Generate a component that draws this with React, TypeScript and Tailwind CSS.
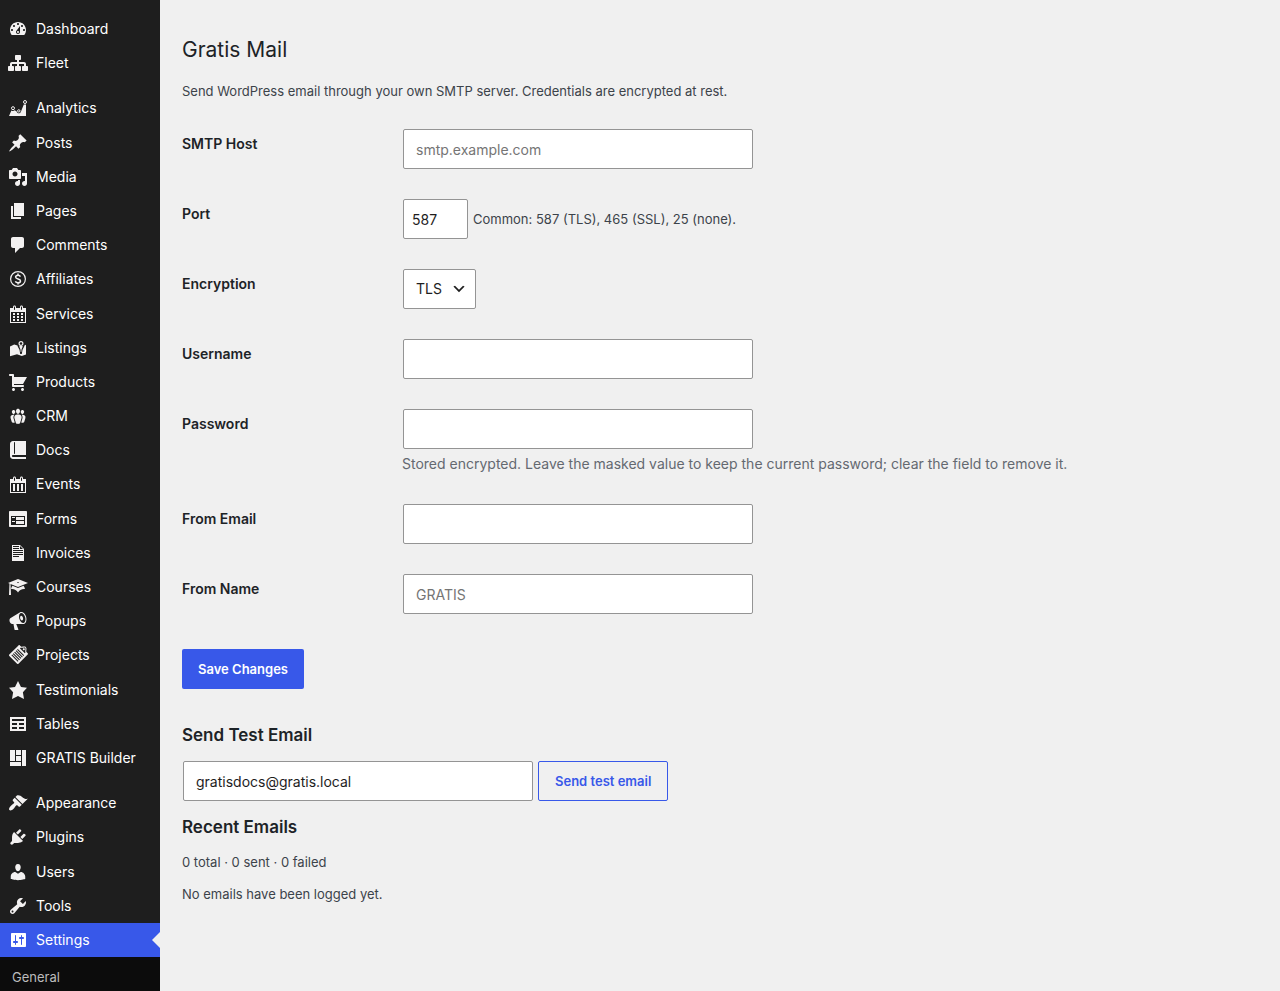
import React, { useState } from "react";

const icons: Record<string, string> = {
  dashboard:
    "M3.76 16h12.48c1.1-1.37 1.76-3.11 1.76-5 0-4.42-3.58-8-8-8s-8 3.58-8 8c0 1.89.66 3.63 1.76 5zM10 4c.55 0 1 .45 1 1s-.45 1-1 1-1-.45-1-1 .45-1 1-1zM6 6c.55 0 1 .45 1 1s-.45 1-1 1-1-.45-1-1 .45-1 1-1zm8 0c.55 0 1 .45 1 1s-.45 1-1 1-1-.45-1-1 .45-1 1-1zm-5.37 5.55L12 7v6c0 1.1-.9 2-2 2s-2-.9-2-2c0-.57.24-1.08.63-1.45zM4 10c.55 0 1 .45 1 1s-.45 1-1 1-1-.45-1-1 .45-1 1-1zm12 0c.55 0 1 .45 1 1s-.45 1-1 1-1-.45-1-1 .45-1 1-1zm-5 3c0-.55-.45-1-1-1s-1 .45-1 1 .45 1 1 1 1-.45 1-1z",
  fleet:
    "M18 13h1c.55 0 1 .45 1 1.01v2.98c0 .56-.45 1.01-1 1.01h-4c-.55 0-1-.45-1-1.01v-2.98c0-.56.45-1.01 1-1.01h1v-2h-5v2h1c.55 0 1 .45 1 1.01v2.98c0 .56-.45 1.01-1 1.01H8c-.55 0-1-.45-1-1.01v-2.98c0-.56.45-1.01 1-1.01h1v-2H4v2h1c.55 0 1 .45 1 1.01v2.98C6 17.55 5.55 18 5 18H1c-.55 0-1-.45-1-1.01v-2.98C0 13.45.45 13 1 13h1v-2c0-1.1.9-2 2-2h5V7H8c-.55 0-1-.45-1-1.01V3.01C7 2.45 7.45 2 8 2h4c.55 0 1 .45 1 1.01v2.98C13 6.55 12.55 7 12 7h-1v2h5c1.1 0 2 .9 2 2v2z",
  posts:
    "M10.44 3.02l1.82-1.82 6.36 6.35-1.83 1.82c-1.05-.68-2.48-.57-3.41.36l-.75.75c-.92.93-1.04 2.35-.35 3.41l-1.83 1.82-2.41-2.41-2.8 2.79c-.42.42-3.38 2.71-3.8 2.29s1.86-3.39 2.28-3.81l2.79-2.79L4.1 9.36l1.83-1.82c1.05.69 2.48.57 3.4-.36l.75-.75c.93-.92 1.05-2.35.36-3.41z",
  media:
    "M13 11V4c0-.55-.45-1-1-1h-1.67L9 1H5L3.67 3H2c-.55 0-1 .45-1 1v7c0 .55.45 1 1 1h10c.55 0 1-.45 1-1zM7 4.5c1.38 0 2.5 1.12 2.5 2.5S8.38 9.5 7 9.5 4.5 8.38 4.5 7 5.62 4.5 7 4.5zM14 6h5v10.5c0 1.38-1.12 2.5-2.5 2.5S14 17.88 14 16.5s1.12-2.5 2.5-2.5c.17 0 .34.02.5.05V9h-3V6zm-4 8.05V13h2v3.5c0 1.38-1.12 2.5-2.5 2.5S7 17.88 7 16.5 8.12 14 9.5 14c.17 0 .34.02.5.05z",
  pages: "M6 15V2h10v13H6zm-1 1h8v2H3V5h2v11z",
  comments:
    "M5 2h9c1.1 0 2 .9 2 2v7c0 1.1-.9 2-2 2h-2l-5 5v-5H5c-1.1 0-2-.9-2-2V4c0-1.1.9-2 2-2z",
  services:
    "M15 4h3v15H2V4h3V3c0-.41.15-.76.44-1.06.29-.29.65-.44 1.06-.44s.77.15 1.06.44c.29.3.44.65.44 1.06v1h4V3c0-.41.15-.76.44-1.06.29-.29.65-.44 1.06-.44s.77.15 1.06.44c.29.3.44.65.44 1.06v1zM6 3v2.5c0 .14.05.26.15.36.09.09.21.14.35.14s.26-.05.35-.14c.1-.1.15-.22.15-.36V3c0-.14-.05-.26-.15-.35-.09-.1-.21-.15-.35-.15s-.26.05-.35.15c-.1.09-.15.21-.15.35zm7 0v2.5c0 .14.05.26.14.36.1.09.22.14.36.14s.26-.05.36-.14c.09-.1.14-.22.14-.36V3c0-.14-.05-.26-.14-.35-.1-.1-.22-.15-.36-.15s-.26.05-.36.15c-.09.09-.14.21-.14.35zm4 15V8H3v10h14zM7 9v2H5V9h2zm2 0h2v2H9V9zm4 2V9h2v2h-2zm-6 1v2H5v-2h2zm2 0h2v2H9v-2zm4 2v-2h2v2h-2zm-6 1v2H5v-2h2zm4 2H9v-2h2v2zm4 0h-2v-2h2v2z",
  products:
    "M6 13h9c.55 0 1 .45 1 1s-.45 1-1 1H5c-.55 0-1-.45-1-1V4H2c-.55 0-1-.45-1-1s.45-1 1-1h3c.55 0 1 .45 1 1v2h13l-4 7H6v1zm-.5 3c.83 0 1.5.67 1.5 1.5S6.33 19 5.5 19 4 18.33 4 17.5 4.67 16 5.5 16zm9 0c.83 0 1.5.67 1.5 1.5s-.67 1.5-1.5 1.5-1.5-.67-1.5-1.5.67-1.5 1.5-1.5z",
  crm: "M8.03 4.46c-.29 1.28.55 3.46 1.97 3.46 1.41 0 2.25-2.18 1.96-3.46-.22-.98-1.08-1.63-1.96-1.63-.89 0-1.74.65-1.97 1.63zm-4.13.9c-.25 1.08.47 2.93 1.67 2.93s1.92-1.85 1.67-2.93c-.19-.83-.92-1.39-1.67-1.39s-1.48.56-1.67 1.39zm8.86 0c-.25 1.08.47 2.93 1.66 2.93 1.2 0 1.92-1.85 1.67-2.93-.19-.83-.92-1.39-1.67-1.39-.74 0-1.47.56-1.66 1.39zm-.59 11.43l1.25-4.3C14.2 10 12.71 8.47 10 8.47c-2.72 0-4.21 1.53-3.44 4.02l1.26 4.3C8.05 17.51 9 18 10 18c.98 0 1.94-.49 2.17-1.21zm-6.1-7.63c-.49.67-.96 1.83-.42 3.59l1.12 3.79c-.34.2-.77.31-1.2.31-.85 0-1.65-.41-1.85-1.03l-1.07-3.65c-.65-2.11.61-3.4 2.92-3.4.27 0 .54.02.79.06-.1.1-.2.22-.29.33zm8.35-.39c2.31 0 3.58 1.29 2.92 3.4l-1.07 3.65c-.2.62-1 1.03-1.85 1.03-.43 0-.86-.11-1.2-.31l1.11-3.77c.55-1.78.08-2.94-.42-3.61-.08-.11-.18-.23-.28-.33.25-.04.51-.06.79-.06z",
  docs: "M5 17h13v2H5c-1.66 0-3-1.34-3-3V4c0-1.66 1.34-3 3-3h13v14H5c-.55 0-1 .45-1 1s.45 1 1 1zm2-3.5v-11c0-.28-.22-.5-.5-.5s-.5.22-.5.5v11c0 .28.22.5.5.5s.5-.22.5-.5z",
  events:
    "M15 4h3v14H2V4h3V3c0-.83.67-1.5 1.5-1.5S8 2.17 8 3v1h4V3c0-.83.67-1.5 1.5-1.5S15 2.17 15 3v1zM6 3v2.5c0 .28.22.5.5.5s.5-.22.5-.5V3c0-.28-.22-.5-.5-.5S6 2.72 6 3zm7 0v2.5c0 .28.22.5.5.5s.5-.22.5-.5V3c0-.28-.22-.5-.5-.5s-.5.22-.5.5zm4 14V8H3v9h14zM7 16V9H5v7h2zm4 0V9H9v7h2zm4 0V9h-2v7h2z",
  forms:
    "M2 2h16c.55 0 1 .45 1 1v14c0 .55-.45 1-1 1H2c-.55 0-1-.45-1-1V3c0-.55.45-1 1-1zm15 14V7H3v9h14zM4 8v1h3V8H4zm4 0v3h8V8H8zm-4 4v1h3v-1H4zm4 0v3h8v-3H8z",
  invoices:
    "M12 2l4 4v12H4V2h8zM5 3v1h6V3H5zm7 3h3l-3-3v3zM5 5v1h6V5H5zm10 3V7H5v1h10zm0 2V9H5v1h10zm0 2v-1H5v1h10zm-4 2v-1H5v1h6z",
  courses:
    "M10 10L2.54 7.02 3 18H1l.48-11.41L0 6l10-4 10 4zm0-5c-.55 0-1 .22-1 .5s.45.5 1 .5 1-.22 1-.5-.45-.5-1-.5zm0 6l5.57-2.23c.71.94 1.2 2.07 1.36 3.3-.3-.04-.61-.07-.93-.07-2.55 0-4.78 1.37-6 3.41C8.78 13.37 6.55 12 4 12c-.32 0-.63.03-.93.07.16-1.23.65-2.36 1.36-3.3z",
  popups:
    "M18.15 5.94c.46 1.62.38 3.22-.02 4.48-.42 1.28-1.26 2.18-2.3 2.48-.16.06-.26.06-.4.06-.06.02-.12.02-.18.02-.06.02-.14.02-.22.02h-6.8l2.22 5.5c.02.14-.06.26-.14.34-.08.1-.24.16-.34.16H6.95c-.1 0-.26-.06-.34-.16-.08-.08-.16-.2-.14-.34l-1-5.5H4.25l-.02-.02c-.5.06-1.08-.18-1.54-.62s-.88-1.08-1.06-1.88c-.24-.8-.2-1.56-.02-2.2.18-.62.58-1.08 1.06-1.3l.02-.02 9-5.4c.1-.06.18-.1.24-.16.06-.04.14-.08.24-.12.16-.08.28-.12.5-.18 1.04-.3 2.24.1 3.22.98s1.84 2.24 2.26 3.86zm-2.58 5.98h-.02c.4-.1.74-.34 1.04-.7.58-.7.86-1.76.86-3.04 0-.64-.1-1.3-.28-1.98-.34-1.36-1.02-2.5-1.78-3.24s-1.68-1.1-2.46-.88c-.82.22-1.4.96-1.7 2-.32 1.04-.28 2.36.06 3.72.38 1.36 1 2.5 1.8 3.24.78.74 1.62 1.1 2.48.88zm-2.54-7.08c.22-.04.42-.02.62.04.38.16.76.48 1.02 1s.42 1.2.42 1.78c0 .3-.04.56-.12.8-.18.48-.44.84-.86.94-.34.1-.8-.06-1.14-.4s-.64-.86-.78-1.5c-.18-.62-.12-1.24.02-1.72s.48-.84.82-.94z",
  projects:
    "M11.9.39l1.4 1.4c1.61.19 3.5-.74 4.61.37s.18 3 .37 4.61l1.4 1.4c.39.39.39 1.02 0 1.41l-9.19 9.2c-.4.39-1.03.39-1.42 0L1.29 11c-.39-.39-.39-1.02 0-1.42l9.2-9.19c.39-.39 1.02-.39 1.41 0zm.58 2.25l-.58.58 4.95 4.95.58-.58c-.19-.6-.2-1.22-.15-1.82.02-.31.05-.62.09-.92.12-1 .18-1.63-.17-1.98s-.98-.29-1.98-.17c-.3.04-.61.07-.92.09-.6.05-1.22.04-1.82-.15zm4.02.93c.39.39.39 1.03 0 1.42s-1.03.39-1.42 0-.39-1.03 0-1.42 1.03-.39 1.42 0zm-6.72.36l-.71.7L15.44 11l.7-.71zM8.36 5.34l-.7.71 6.36 6.36.71-.7zM6.95 6.76l-.71.7 6.37 6.37.7-.71zM5.54 8.17l-.71.71 6.36 6.36.71-.71zM4.12 9.58l-.71.71 6.37 6.37.71-.71z",
  testimonials: "M10 1l3 6 6 .75-4.12 4.62L16 19l-6-3-6 3 1.13-6.63L1 7.75 7 7z",
  tables:
    "M18 17V3H2v14h16zM16 7H4V5h12v2zm-7 4H4V9h5v2zm7 0h-5V9h5v2zm-7 4H4v-2h5v2zm7 0h-5v-2h5v2z",
  builder: "M2 2h5v11H2V2zm6 0h5v5H8V2zm6 0h4v16h-4V2zM8 8h5v5H8V8zm-6 6h11v4H2v-4z",
  appearance:
    "M14.48 11.06L7.41 3.99l1.5-1.5c.5-.56 2.3-.47 3.51.32 1.21.8 1.43 1.28 2.91 2.1 1.18.64 2.45 1.26 4.45.85zm-.71.71L6.7 4.7 4.93 6.47c-.39.39-.39 1.02 0 1.41l1.06 1.06c.39.39.39 1.03 0 1.42-.6.6-1.43 1.11-2.21 1.69-.35.26-.7.53-1.01.84C1.43 14.23.4 16.08 1.4 17.07c.99 1 2.84-.03 4.18-1.36.31-.31.58-.66.85-1.02.57-.78 1.08-1.61 1.69-2.21.39-.39 1.02-.39 1.41 0l1.06 1.06c.39.39 1.02.39 1.41 0z",
  plugins:
    "M13.11 4.36L9.87 7.6 8 5.73l3.24-3.24c.35-.34 1.05-.2 1.56.32.52.51.66 1.21.31 1.55zm-8 1.77l.91-1.12 9.01 9.01-1.19.84c-.71.71-2.63 1.16-3.82 1.16H6.14L4.9 17.26c-.59.59-1.54.59-2.12 0-.59-.58-.59-1.53 0-2.12l1.24-1.24v-3.88c0-1.13.4-3.19 1.09-3.89zm7.26 3.97l3.24-3.24c.34-.35 1.04-.21 1.55.31.52.51.66 1.21.31 1.55l-3.24 3.25z",
  users:
    "M10 9.25c-2.27 0-2.73-3.44-2.73-3.44C7 4.02 7.82 2 9.97 2c2.16 0 2.98 2.02 2.71 3.81 0 0-.41 3.44-2.68 3.44zm0 2.57L12.72 10c2.39 0 4.52 2.33 4.52 4.53v2.49s-3.65 1.13-7.24 1.13c-3.65 0-7.24-1.13-7.24-1.13v-2.49c0-2.25 1.94-4.48 4.47-4.48z",
  tools:
    "M16.68 9.77c-1.34 1.34-3.3 1.67-4.95.99l-5.41 6.52c-.99.99-2.59.99-3.58 0s-.99-2.59 0-3.57l6.52-5.42c-.68-1.65-.35-3.61.99-4.95 1.28-1.28 3.12-1.62 4.72-1.06l-2.89 2.89 2.82 2.82 2.86-2.87c.53 1.58.18 3.39-1.08 4.65zM3.81 16.21c.4.39 1.04.39 1.43 0 .4-.4.4-1.04 0-1.43-.39-.4-1.03-.4-1.43 0-.39.39-.39 1.03 0 1.43z",
  settings:
    "M18 16V4c0-.55-.45-1-1-1H4c-.55 0-1 .45-1 1v12c0 .55.45 1 1 1h13c.55 0 1-.45 1-1zM8 11h1c.55 0 1 .45 1 1s-.45 1-1 1H8v1.5c0 .28-.22.5-.5.5s-.5-.22-.5-.5V13H6c-.55 0-1-.45-1-1s.45-1 1-1h1V5.5c0-.28.22-.5.5-.5s.5.22.5.5V11zm5-2h-1c-.55 0-1-.45-1-1s.45-1 1-1h1V5.5c0-.28.22-.5.5-.5s.5.22.5.5V7h1c.55 0 1 .45 1 1s-.45 1-1 1h-1v5.5c0 .28-.22.5-.5.5s-.5-.22-.5-.5V9z",
};

const menu = [
  [
    { icon: "dashboard", label: "Dashboard" },
    { icon: "fleet", label: "Fleet" },
  ],
  [
    { icon: "analytics", label: "Analytics" },
    { icon: "posts", label: "Posts" },
    { icon: "media", label: "Media" },
    { icon: "pages", label: "Pages" },
    { icon: "comments", label: "Comments" },
    { icon: "affiliates", label: "Affiliates" },
    { icon: "services", label: "Services" },
    { icon: "listings", label: "Listings" },
    { icon: "products", label: "Products" },
    { icon: "crm", label: "CRM" },
    { icon: "docs", label: "Docs" },
    { icon: "events", label: "Events" },
    { icon: "forms", label: "Forms" },
    { icon: "invoices", label: "Invoices" },
    { icon: "courses", label: "Courses" },
    { icon: "popups", label: "Popups" },
    { icon: "projects", label: "Projects" },
    { icon: "testimonials", label: "Testimonials" },
    { icon: "tables", label: "Tables" },
    { icon: "builder", label: "GRATIS Builder" },
  ],
  [
    { icon: "appearance", label: "Appearance" },
    { icon: "plugins", label: "Plugins" },
    { icon: "users", label: "Users" },
    { icon: "tools", label: "Tools" },
    { icon: "settings", label: "Settings" },
  ],
];

const inputClass =
  "mx-px h-10 rounded-xs border border-[#949494] bg-white text-sm text-[#1e1e1e] placeholder:text-[#757575]";

function IconShape({ name }: { name: string }) {
  if (name === "affiliates") {
    return (
      <g fill="none" stroke="currentColor">
        <circle cx="10" cy="10" r="7.4" strokeWidth="1.2" />
        <path
          strokeWidth="1.5"
          d="M12.4 7.6C12 6.7 11.1 6.3 10 6.3c-1.4 0-2.4.7-2.4 1.8 0 2.5 4.9 1.3 4.9 3.8 0 1.1-1.1 1.8-2.5 1.8-1.3 0-2.3-.5-2.6-1.5M10 4.5v2M10 13.5v2"
        />
      </g>
    );
  }
  if (name === "analytics") {
    return (
      <>
        <path d="M1 18l2.4-5.6c1.100.8 2.300.7 3.300-.1l2 1.200c.5 2.300 3.300 2.500 4.200.2L15.800 6.400H18V18z" />
        <g fill="none" stroke="currentColor">
          <circle cx="5" cy="10.200" r="1.500" />
          <circle cx="10.800" cy="12.900" r="1.200" />
          <circle cx="17" cy="4" r="1.500" />
        </g>
      </>
    );
  }
  if (name === "listings") {
    return (
      <>
        <path d="M2 8.500L6.200 6.500l3.300 1c.3 1.700 1.400 3.100 2 4.200l.7 4.300h1.600l.7-4.300c.7-1.100 1.600-2.500 2-4.200L18 6.800V16.500l-4.200 1.500-4.800-1.700L2 18.300z" />
        <path d="M12.300 8h1.400l1.100.2c-.4 1.400-1 2.300-1.300 3.300l-.2 2.500h-.600l-.2-2.500c-.3-1-.9-1.900-1.300-3.300z" />
        <circle cx="13" cy="5.500" r="1.900" fill="none" stroke="currentColor" strokeWidth="1.200" />
      </>
    );
  }
  return <path fillRule="evenodd" d={icons[name]} />;
}

function MenuIcon({ name }: { name: string }) {
  return (
    <svg viewBox="0 0 20 20" className="size-5 shrink-0" fill="currentColor" aria-hidden="true">
      <IconShape name={name} />
    </svg>
  );
}

function Sidebar() {
  return (
    <nav className="flex w-40 shrink-0 flex-col bg-[#1e1e1e] pt-3">
      <div className="space-y-[11px]">
        {menu.map((group, idx) => (
          <ul key={idx}>
            {group.map((item) => {
              const active = item.label === "Settings";
              return (
                <li key={item.label}>
                  <a
                    href="#"
                    className={`relative flex items-center gap-2 px-2 py-2 text-sm leading-[1.3] ${
                      active ? "bg-[#3858e9] text-white" : "text-white hover:text-[#7b90ff]"
                    }`}
                  >
                    <span className={`-my-px flex ${active ? "text-white" : "text-[#f3f1f1]"}`}>
                      <MenuIcon name={item.icon} />
                    </span>
                    {item.label}
                    {active && (
                      <span className="absolute top-1/2 right-0 -translate-y-1/2 border-8 border-l-0 border-transparent border-r-[#f0f0f0]" />
                    )}
                  </a>
                </li>
              );
            })}
          </ul>
        ))}
      </div>
      <ul className="flex-1 bg-[#0c0c0c] pt-2">
        <li>
          <a href="#" className="block px-3 py-1 text-[13px] leading-[17px] text-[#bcbcbc]">
            General
          </a>
        </li>
      </ul>
    </nav>
  );
}

function Field({
  id,
  label,
  children,
}: {
  id: string;
  label: string;
  children: React.ReactNode;
}) {
  return (
    <div className="flex py-[15px]">
      <label
        htmlFor={id}
        className="w-[220px] shrink-0 pt-[6px] text-sm leading-[18px] font-semibold text-[#1d2327]"
      >
        {label}
      </label>
      <div className="min-w-0 flex-1">{children}</div>
    </div>
  );
}

export default function App() {
  const [encryption, setEncryption] = useState("TLS");

  return (
    <div className="flex min-h-screen bg-[#f0f0f0] font-['Inter',sans-serif] text-[13px] leading-5 text-[#3c434a]">
      <Sidebar />

      <main className="min-w-0 flex-1 px-[22px] pt-[35px]">
        <h1 className="text-[21px] leading-[30px] text-[#1d2327]">Gratis Mail</h1>
        <p className="mt-4">
          Send WordPress email through your own SMTP server. Credentials are encrypted at rest.
        </p>

        <form className="mt-[13px]" onSubmit={(e) => e.preventDefault()}>
          <Field id="host" label="SMTP Host">
            <input id="host" type="text" placeholder="smtp.example.com" className={`${inputClass} w-[350px] px-3`} />
          </Field>
          <Field id="port" label="Port">
            <div className="flex items-center gap-1">
              <input id="port" type="text" defaultValue="587" className={`${inputClass} w-[65px] px-2`} />
              <span>Common: 587 (TLS), 465 (SSL), 25 (none).</span>
            </div>
          </Field>
          <Field id="encryption" label="Encryption">
            <div className="relative flex w-[75px]">
              <select
                id="encryption"
                value={encryption}
                onChange={(e) => setEncryption(e.target.value)}
                className={`${inputClass} w-full appearance-none pr-6 pl-3`}
              >
                <option>TLS</option>
                <option>SSL</option>
                <option>None</option>
              </select>
              <svg
                viewBox="0 0 20 20"
                className="pointer-events-none absolute top-3 right-2.5 size-4 text-[#1e1e1e]"
                fill="currentColor"
                aria-hidden="true"
              >
                <path d="M5 6l5 5 5-5 2 1-7 7-7-7 2-1z" />
              </svg>
            </div>
          </Field>
          <Field id="username" label="Username">
            <input id="username" type="text" className={`${inputClass} w-[350px] px-3`} />
          </Field>
          <Field id="password" label="Password">
            <input id="password" type="password" className={`${inputClass} w-[350px] px-3`} />
            <p className="mt-1 text-sm leading-[21px] text-[#646970]">
              Stored encrypted. Leave the masked value to keep the current password; clear the field to remove it.
            </p>
          </Field>
          <Field id="from-email" label="From Email">
            <input id="from-email" type="email" className={`${inputClass} w-[350px] px-3`} />
          </Field>
          <Field id="from-name" label="From Name">
            <input id="from-name" type="text" placeholder="GRATIS" className={`${inputClass} w-[350px] px-3`} />
          </Field>

          <button
            type="submit"
            className="mt-5 h-10 rounded-xs bg-[#3858e9] px-4 font-semibold text-white hover:bg-[#2145e6]"
          >
            Save Changes
          </button>
        </form>

        <h2 className="mt-[35px] text-[17px] leading-[22px] font-semibold text-[#1d2327]">Send Test Email</h2>
        <form className="mt-[15px] flex items-center gap-1" onSubmit={(e) => e.preventDefault()}>
          <input
            type="email"
            aria-label="Test email recipient"
            defaultValue="gratisdocs@gratis.local"
            className={`${inputClass} w-[350px] px-3`}
          />
          <button
            type="submit"
            className="h-10 rounded-xs border border-[#3858e9] px-4 font-semibold text-[#3858e9]"
          >
            Send test email
          </button>
        </form>

        <h2 className="mt-[15px] text-[17px] leading-[22px] font-semibold text-[#1d2327]">Recent Emails</h2>
        <p className="mt-[14px]">0 total · 0 sent · 0 failed</p>
        <p className="mt-3">No emails have been logged yet.</p>
      </main>
    </div>
  );
}
